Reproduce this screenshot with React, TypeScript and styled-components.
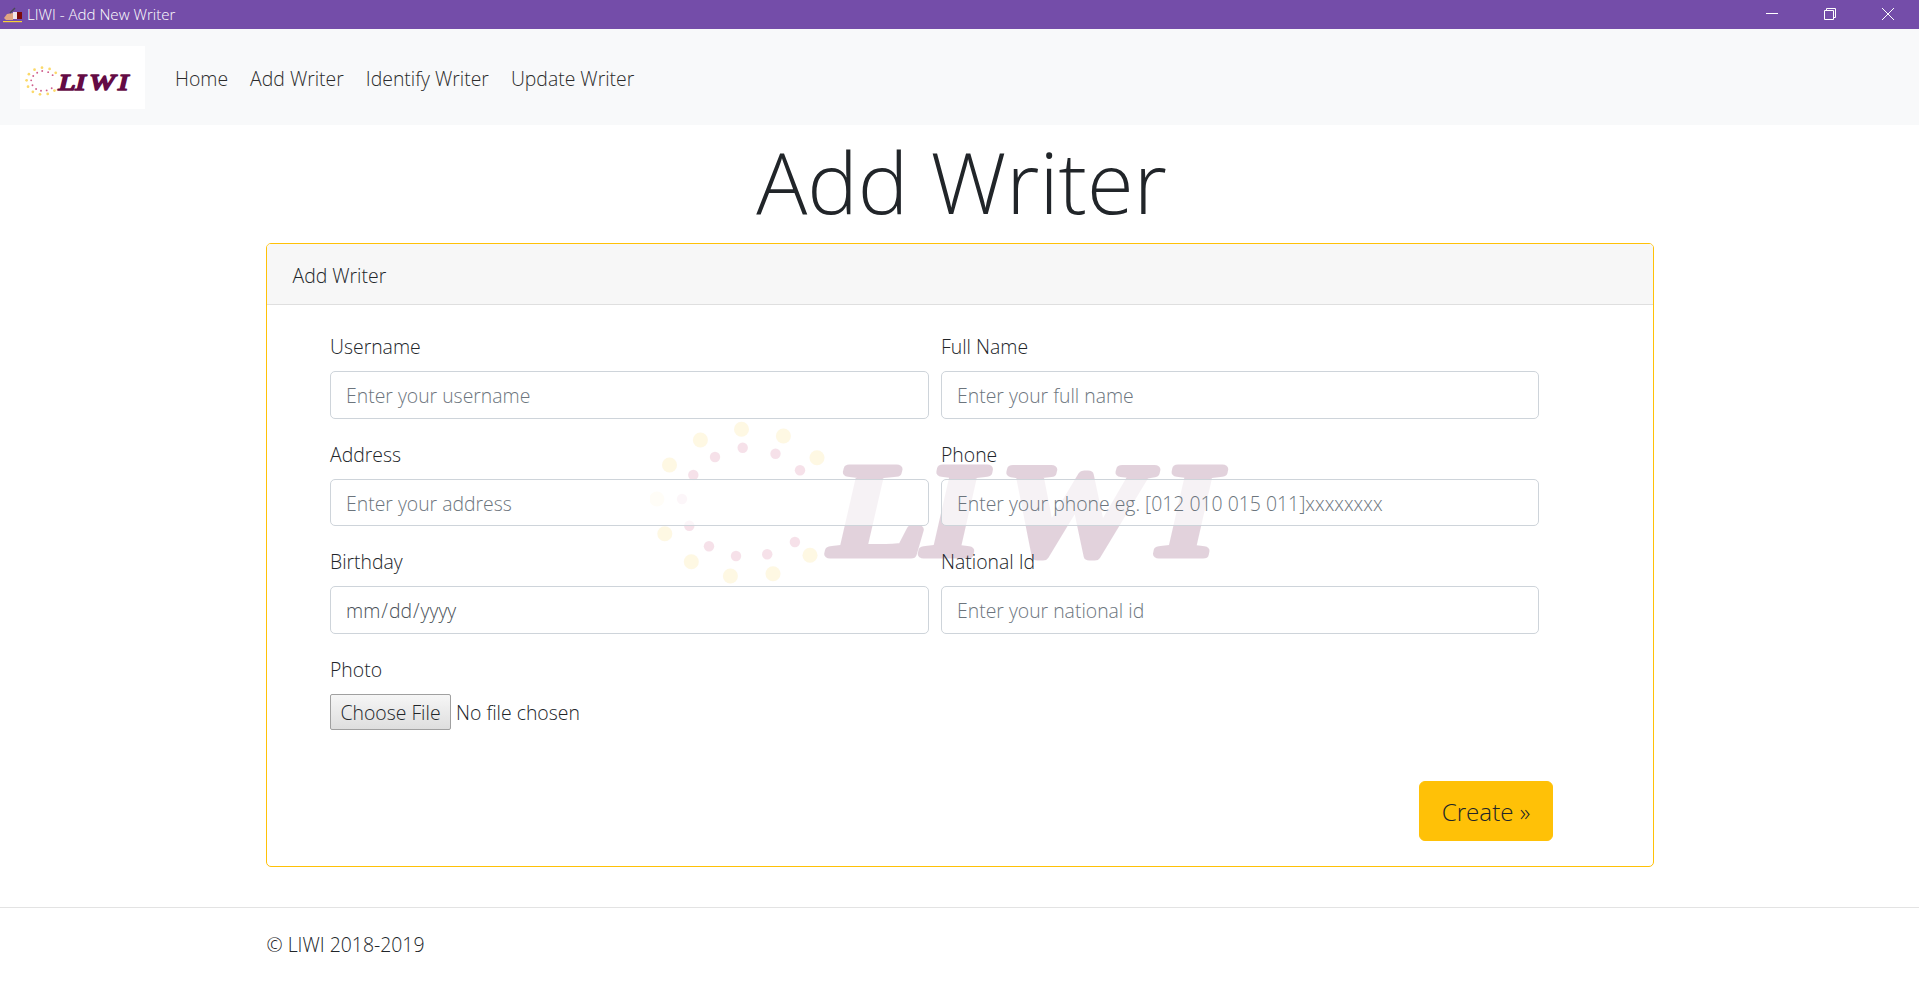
import React from 'react';
import styled, { createGlobalStyle } from 'styled-components';

const FONT = '"Open Sans", "Noto Sans", sans-serif';

const GlobalStyle = createGlobalStyle`
  html, body {
    margin: 0;
    padding: 0;
    background: #fff;
  }
  body {
    font-family: ${FONT};
    font-size: 19.4px;
    font-weight: 350;
    line-height: 30px;
    color: #212529;
  }
  * {
    box-sizing: border-box;
  }
`;

const TitleBar = styled.div`
  height: 29px;
  background: #744da9;
  display: flex;
  align-items: center;
  padding-right: 2px;
  color: #fff;
`;

const TitleIcon = styled.svg`
  width: 24px;
  height: 20px;
  margin-right: 3px;
  flex: none;
`;

const TitleText = styled.span`
  flex: 1;
  font-size: 15.1px;
  line-height: 29px;
`;

const WindowButton = styled.div`
  width: 58px;
  height: 28px;
  align-self: flex-start;
  display: flex;
  align-items: center;
  justify-content: center;
  svg {
    display: block;
  }
`;

const Navbar = styled.nav`
  height: 96px;
  background: #f8f9fa;
  padding: 16px 20px;
  display: flex;
  align-items: center;
`;

const Brand = styled.a`
  width: 125px;
  height: 63px;
  background: #fff;
  margin-right: 19px;
  flex: none;
  svg {
    display: block;
    width: 108px;
    height: 30px;
    margin: 20px 0 0 5px;
  }
`;

const NavList = styled.div`
  display: flex;
`;

const NavLink = styled.a`
  padding: 12px 11px 8px;
  color: #2b2b2b;
`;

const Heading = styled.h1`
  margin: 0 0 10px;
  padding: 4px 0 0 4px;
  text-align: center;
  font-size: 85px;
  font-weight: 300;
  line-height: 104px;
`;

const Container = styled.main`
  width: 1388px;
  margin: 0 auto;
`;

const Card = styled.section`
  position: relative;
  height: 624px;
  border: 1px solid #ffc107;
  border-radius: 5px;
`;

const CardHeader = styled.div`
  height: 61px;
  padding: 17px 25px 13px 26px;
  background: #f7f7f7;
  border-bottom: 1px solid #dfdfdf;
  border-radius: 4px 4px 0 0;
`;

const Watermark = styled.svg`
  position: absolute;
  left: 383px;
  top: 176px;
  width: 590px;
  height: 165px;
  opacity: 0.18;
`;

const CardBody = styled.form`
  position: relative;
  padding: 26px 25px 0 63.5px;
`;

const FieldGrid = styled.div`
  display: grid;
  grid-template-columns: 599px 598px;
  column-gap: 12px;
  row-gap: 20px;
`;

const Field = styled.div``;

const Label = styled.label`
  display: block;
  padding-top: 1px;
  margin-bottom: 9px;
`;

const TextInput = styled.input`
  display: block;
  width: 100%;
  height: 47.5px;
  padding: 2px 15px 0;
  font: inherit;
  color: #495057;
  background: rgba(255, 255, 255, 0.7);
  border: 1px solid #ced4da;
  border-radius: 5px;
  outline: none;
  &::placeholder {
    color: #6c757d;
    opacity: 1;
  }
  &[type='date'] {
    padding-left: 14px;
  }
  &::-webkit-calendar-picker-indicator {
    display: none;
  }
`;

const FileInput = styled.input`
  display: block;
  width: 400px;
  height: 36px;
  font: inherit;
  color: #212529;
  &::file-selector-button {
    width: 121px;
    height: 36px;
    margin-right: 5px;
    padding: 2px 0 0;
    font: inherit;
    color: #212529;
    background: linear-gradient(#f6f6f6, #dedede);
    border: 1px solid #a0a0a0;
    border-radius: 2px;
  }
`;

const ActionRow = styled.div`
  display: flex;
  justify-content: flex-end;
  width: 1223px;
  margin-top: 51px;
`;

const CreateButton = styled.button`
  width: 134px;
  height: 60px;
  padding: 2px 0 0;
  font-family: ${FONT};
  font-size: 24.2px;
  font-weight: 350;
  color: #212529;
  background: #ffc107;
  border: 1px solid #ffc107;
  border-radius: 6px;
`;

const FooterRule = styled.hr`
  margin: 40px 0 0;
  border: 0;
  border-top: 1px solid #e3e3e3;
`;

const Footer = styled.footer`
  width: 1388px;
  margin: 0 auto;
  padding: 22px 0 0 1px;
`;

const YELLOW_DOTS = [
  [741.5, 429.3], [700.4, 440], [783.4, 436], [817, 457.7], [669.5, 465], [656.9, 499],
  [664.8, 533.7], [691.3, 561.7], [730.4, 576], [773, 573.7], [810, 555.3],
];

const PINK_DOTS = [
  [742.7, 447.7], [715, 457], [775.5, 453.7], [800, 470.3], [693.3, 475], [682, 499],
  [689.3, 525.7], [709, 546.3], [736, 556], [767.2, 554.3], [794.9, 542],
];

// logo art, same drawing for the navbar and the card watermark
const MarkArt = () => (
  <>
    {YELLOW_DOTS.map(([cx, cy]) => (
      <circle key={`y${cx}`} cx={cx} cy={cy} r="7.5" fill="#fbd96a" />
    ))}
    {PINK_DOTS.map(([cx, cy]) => (
      <circle key={`p${cx}`} cx={cx} cy={cy} r="5.2" fill="#d05f8c" />
    ))}
    <text
      transform="scale(1.3 1)"
      x="640 711 770 892"
      y="554"
      fontFamily='"Liberation Serif", serif'
      fontWeight="400"
      fontStyle="italic"
      fontSize="130"
      fill="#640b45"
      stroke="#640b45"
      strokeWidth="9"
      strokeLinejoin="round"
      strokeLinecap="round"
    >
      LIWI
    </text>
  </>
);

const App: React.FC = () => {
  return (
    <>
      <GlobalStyle />
      <TitleBar>
        <TitleIcon viewBox="0 0 24 20">
          <path d="M4 13l3-4 6-1v7H6z" fill="#e0a583" />
          <path d="M10 8l5-5" stroke="#4a4a55" strokeWidth="1.4" />
          <rect x="13" y="7" width="4" height="7" fill="#efe4ea" />
          <rect x="17" y="7" width="5" height="7" fill="#7c0a0a" />
          <rect x="3" y="16" width="19" height="1.2" fill="#f7d038" />
        </TitleIcon>
        <TitleText>LIWI - Add New Writer</TitleText>
        <WindowButton>
          <svg width="12" height="12" viewBox="0 0 12 12">
            <path d="M0 5.5h12" stroke="#fff" fill="none" />
          </svg>
        </WindowButton>
        <WindowButton>
          <svg width="12" height="12" viewBox="0 0 12 12">
            <path d="M.5 2.5h9v9h-9zM2.5 2.5v-2h9v9h-2" stroke="#fff" fill="none" />
          </svg>
        </WindowButton>
        <WindowButton>
          <svg width="12" height="12" viewBox="0 0 12 12">
            <path d="M0 0l12 12M12 0L0 12" stroke="#fff" fill="none" />
          </svg>
        </WindowButton>
      </TitleBar>

      <Navbar>
        <Brand>
          <svg viewBox="650 420 590 165">
            <MarkArt />
          </svg>
        </Brand>
        <NavList>
          <NavLink>Home</NavLink>
          <NavLink>Add Writer</NavLink>
          <NavLink>Identify Writer</NavLink>
          <NavLink>Update Writer</NavLink>
        </NavList>
      </Navbar>

      <Heading>Add Writer</Heading>

      <Container>
        <Card>
          <CardHeader>Add Writer</CardHeader>
          <Watermark viewBox="650 420 590 165">
            <MarkArt />
          </Watermark>
          <CardBody>
            <FieldGrid>
              <Field>
                <Label>Username</Label>
                <TextInput placeholder="Enter your username" />
              </Field>
              <Field>
                <Label>Full Name</Label>
                <TextInput placeholder="Enter your full name" />
              </Field>
              <Field>
                <Label>Address</Label>
                <TextInput placeholder="Enter your address" />
              </Field>
              <Field>
                <Label>Phone</Label>
                <TextInput placeholder="Enter your phone eg. [012 010 015 011]xxxxxxxx" />
              </Field>
              <Field>
                <Label>Birthday</Label>
                <TextInput type="date" />
              </Field>
              <Field>
                <Label>National Id</Label>
                <TextInput placeholder="Enter your national id" />
              </Field>
              <Field>
                <Label>Photo</Label>
                <FileInput type="file" />
              </Field>
            </FieldGrid>
            <ActionRow>
              <CreateButton type="button">Create »</CreateButton>
            </ActionRow>
          </CardBody>
        </Card>
      </Container>

      <FooterRule />
      <Footer>© LIWI 2018-2019</Footer>
    </>
  );
};

export default App;
